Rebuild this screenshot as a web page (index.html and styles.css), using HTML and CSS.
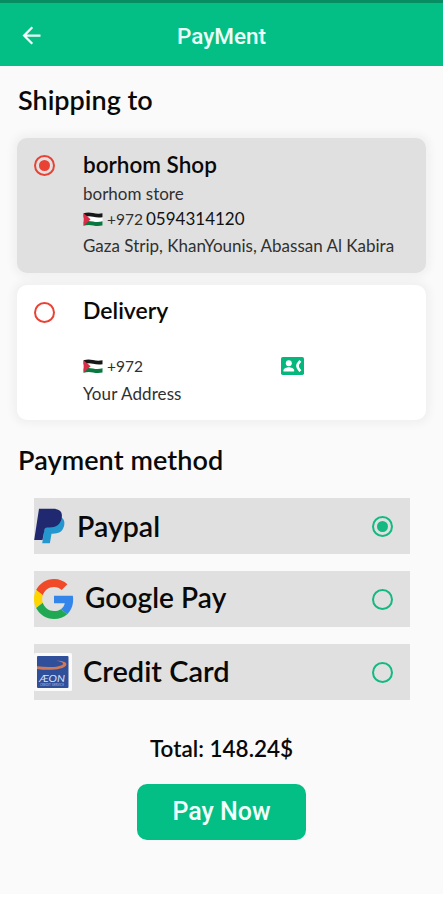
FILE: index.html
```html
<!DOCTYPE html>
<html lang="en">
<head>
<meta charset="utf-8">
<title>PayMent</title>
<link rel="stylesheet" href="styles.css">
</head>
<body>
<svg class="defs" width="0" height="0" aria-hidden="true">
  <symbol id="flag" viewBox="0 0 20 15">
    <path fill="#fff" d="M.6 1.4Q5 .2 10 1.2t9.5.2v12Q14 14.400 10 13.400T.6 13.600z"/>
    <path fill="#171717" d="M.6 1.200Q5-.2 10 1t9.500.2v4Q15 6 10 4.800T.6 5.400z"/>
    <path fill="#08783f" d="M.6 9.600Q5 8.400 10 9.500t9.500-.2v4.200Q15 14.500 10 13.400t-9.400.4z"/>
    <path fill="#d92c46" d="M.6 1.200 7.600 7.300.6 13.800z"/>
  </symbol>
</svg>
<div class="screen">
  <header class="app-bar">
    <svg class="back" viewBox="0 0 24 24"><path fill="currentColor" d="M20 11H7.830l5.590-5.590L12 4l-8 8 8 8 1.410-1.410L7.830 13H20z"/></svg>
    <h1 class="app-title">PayMent</h1>
  </header>
  <main>
    <h2 class="heading">Shipping to</h2>
    <section class="card selected">
      <span class="radio red on"></span>
      <div class="details">
        <h3 class="name">borhom Shop</h3>
        <p class="line store">borhom store</p>
        <p class="line phone"><svg class="flag"><use href="#flag"/></svg><span class="code">+972</span><span class="number">0594314120</span></p>
        <p class="line address">Gaza Strip, KhanYounis, Abassan Al Kabira</p>
      </div>
    </section>
    <section class="card">
      <span class="radio red"></span>
      <div class="details">
        <h3 class="name delivery">Delivery</h3>
        <p class="line phone entry"><svg class="flag"><use href="#flag"/></svg><span class="code">+972</span>
          <svg class="contact" viewBox="0 0 23 18"><rect width="23" height="18" rx="1.800" fill="#06b77d"/><circle cx="7.800" cy="6.200" r="3" fill="#fff"/><path fill="#fff" d="M2.500 14.500v-1.200c0-2 3.300-3 5.300-3s5.300 1 5.300 3v1.200z"/><path fill="none" stroke="#fff" stroke-width="2.600" d="M19.400 3.900 18.100 5.400Q14.900 9 18.100 12.600l1.300 1.500"/></svg>
        </p>
        <p class="line your-address">Your Address</p>
      </div>
    </section>
    <h2 class="heading payment">Payment method</h2>
    <div class="methods">
      <div class="method">
        <svg class="logo paypal" viewBox="0 0 31 36"><path fill="#2498ce" d="M27 9c3.500 2.300 4 6 2.900 9.600-1.600 5.400-5.500 7.200-11 7.200h-1.400l-1.600 9.400H8.200l3.200-20.400z"/><path fill="#20296f" d="M5 .8h14c7 0 9.900 3.500 8.700 9.500-1.300 6.300-5.500 9.200-12.400 9.200h-2.200c-1.500 0-2.300.7-2.600 2.200L8.500 32H.2z"/></svg>
        <span class="label">Paypal</span><span class="radio green on"></span>
      </div>
      <div class="method">
        <svg class="logo google" viewBox="0 0 48 48"><path fill="#f04a28" d="M24 0C30.470 0 35.900 2.380 40.060 6.250L33.210 13.100C30.710 10.720 27.540 9.500 24 9.500c-6.260 0-11.570 4.220-13.460 9.910L2.560 13.220C6.510 5.380 14.620 0 24 0z"/><path fill="#3385ea" d="M46.980 24.550c0-1.570-.15-3.090-.38-4.550H24v9.020h12.940c-.58 2.960-2.260 5.480-4.780 7.180l7.730 6c4.510-4.180 7.090-10.360 7.090-17.650z"/><path fill="#ffd500" d="M10.530 28.590c-.48-1.450-.76-2.990-.76-4.590s.27-3.140.76-4.590l-7.980-6.190C.92 16.460 0 20.120 0 24s.92 7.540 2.560 10.780z"/><path fill="#20a852" d="M24 48c6.480 0 11.930-2.130 15.890-5.810l-7.730-6c-2.150 1.450-4.920 2.300-8.160 2.300-6.260 0-11.570-4.220-13.470-9.910l-7.980 6.190C6.510 42.620 14.620 48 24 48z"/></svg>
        <span class="label google-label">Google Pay</span><span class="radio green"></span>
      </div>
      <div class="method">
        <svg class="logo aeon" viewBox="0 0 38 38"><rect width="38" height="38" rx="1.500" fill="#fafafa"/><rect x="3" y="3" width="31.500" height="32" rx="1" fill="#304f9b"/><path fill="#cf7957" d="M3 13.200c12 1.700 25 .7 26-2.300.5-1.600-3-2.400-7-3.200 8 .1 11 1.600 10.300 4.300C31 16.400 15 18 3 16z"/><text class="aeon-name" x="5" y="28.500" textLength="26" lengthAdjust="spacingAndGlyphs">ÆON</text><text class="aeon-sub" x="6" y="32.800" textLength="24" lengthAdjust="spacingAndGlyphs">CREDIT SERVICE</text></svg>
        <span class="label credit-label">Credit Card</span><span class="radio green"></span>
      </div>
    </div>
    <p class="total">Total: 148.24$</p>
    <button class="pay" type="button">Pay Now</button>
  </main>
</div>
</body>
</html>
```
FILE: styles.css
```css
* { box-sizing: border-box; }
body { margin: 0; background: #fff; font-family: Lato, sans-serif; color: #090909; }
h1, h2, h3, p { margin: 0; font-weight: 600; white-space: nowrap; }
.defs { display: block; height: 0; }
.screen { height: 894px; background: #fafafa; }
.app-bar {
  display: grid; grid-template-columns: 60px 1fr 60px; align-items: center;
  height: 66px; background: #03bf85; border-top: 3px solid #078d62; color: #edfff8;
}
.back { width: 27px; height: 27px; margin: 1px 0 0 18px; }
.app-title { padding-top: 2px; font: 500 22.5px/30px Roboto, sans-serif; text-align: center; }
main { display: flex; flex-direction: column; padding: 0 17px; }
.heading { margin: 17px 0 22px 1px; font-size: 27px; line-height: 33px; }
.card {
  display: flex; height: 135px; margin-bottom: 12px; padding: 11px 17px; border-radius: 10px;
  background: #fff; box-shadow: 0 0 8px 4px rgba(0, 0, 0, .045);
}
.card.selected { background: #e0e0e0; }
.radio { position: relative; flex: none; width: 21px; height: 21px; border: 2px solid; border-radius: 50%; }
.radio.on::after { content: ""; position: absolute; inset: 3px; border-radius: 50%; background: currentColor; }
.red { margin-top: 6px; color: #e94235; }
.green { margin-left: auto; color: #13b981; }
.details { margin-left: 28px; }
.name { height: 30px; font-size: 22.5px; line-height: 32px; }
.delivery { font-size: 23px; line-height: 28px; }
.line { display: flex; align-items: center; height: 26px; font-size: 17px; font-weight: 400; line-height: 26px; color: #303030; }
.store { margin-top: 2px; margin-bottom: -1px; }
.flag { width: 20px; height: 15px; margin-right: 4px; }
.code { font-size: 15.5px; }
.number { margin-left: 3px; font-size: 17px; color: #111; }
.address { margin-top: 1px; }
.entry { margin-top: 27px; }
.contact { width: 23px; height: 18px; margin-left: 138px; }
.your-address { margin-top: 2px; letter-spacing: .1px; }
.payment { margin: 11px 0 22px 1px; letter-spacing: .1px; }
.methods { display: grid; gap: 17px; padding: 0 16px 0 17px; }
.method { display: flex; align-items: center; height: 56px; padding-right: 17px; background: #e0e0e0; }
.logo { flex: none; }
.label { font-size: 28.5px; font-weight: 600; line-height: 36px; white-space: nowrap; }
.google-label { padding-bottom: 4px; font-size: 28px; letter-spacing: .1px; }
.credit-label { padding-bottom: 2px; font-size: 29px; }
.paypal { width: 31px; height: 36px; margin-right: 12px; }
.google { width: 40px; height: 40px; margin-right: 11px; }
.aeon { width: 38px; height: 38px; margin-right: 11px; }
.aeon-name { font: italic 10px Lato, sans-serif; fill: #d8e0f5; }
.aeon-sub { font: 3.5px Lato, sans-serif; fill: #a8b8e0; }
.total { margin-top: 33px; font-size: 22.5px; line-height: 32px; text-align: center; }
.pay {
  align-self: center; width: 169px; height: 56px; margin-top: 19px; padding: 0;
  border: 0; border-radius: 10px; background: #03bf85; color: #f5fffb; font: 500 25px/56px Roboto, sans-serif;
}
```
